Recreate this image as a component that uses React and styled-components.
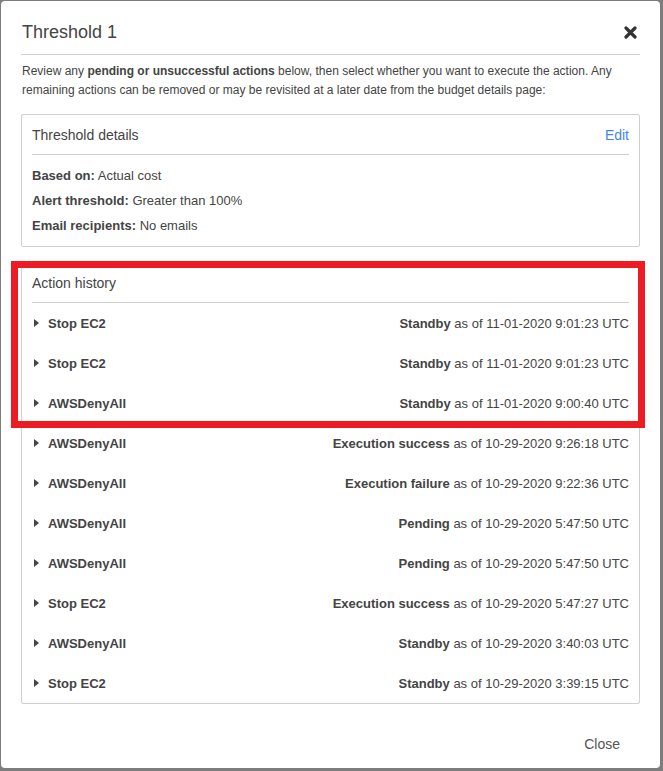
import React from 'react';
import styled, { createGlobalStyle } from 'styled-components';

const GlobalStyle = createGlobalStyle`
  html, body {
    margin: 0;
    padding: 0;
    background: #7d7d7d;
  }

  body {
    font-family: 'Liberation Sans', Arial, sans-serif;
    color: #444;
  }
`;

const Backdrop = styled.div`
  width: 663px;
  height: 771px;
  padding: 1px 0 0 1px;
  box-sizing: border-box;
`;

const Modal = styled.div`
  width: 659px;
  height: 767px;
  box-sizing: border-box;
  background: #fff;
  border-radius: 4px;
  padding: 0 20px;
  display: flex;
  flex-direction: column;
`;

const Header = styled.div`
  display: flex;
  align-items: center;
  justify-content: space-between;
  padding: 19px 0 10px;
  border-bottom: 1px solid #cfcfcf;
`;

const Title = styled.h2`
  margin: 0 0 0 1px;
  font-size: 18px;
  font-weight: 400;
  line-height: 24px;
  color: #444;
`;

const CloseIcon = styled.button`
  border: 0;
  background: none;
  padding: 0;
  margin-right: 3px;
  width: 13px;
  height: 13px;
  display: flex;
  cursor: pointer;
`;

const Intro = styled.p`
  margin: 7px 0 0 1px;
  font-size: 12px;
  line-height: 19px;
  color: #444;

  b {
    font-weight: 700;
  }
`;

const Card = styled.section`
  position: relative;
  border: 1px solid #d0d0d0;
  border-radius: 2px;
  margin-top: ${({ $gap }) => $gap}px;
`;

const CardHeader = styled.div`
  display: flex;
  align-items: center;
  justify-content: space-between;
  height: 39px;
  margin: 0 10px;
  border-bottom: 1px solid #cfcfcf;
  font-size: 14px;
  color: #444;
`;

const EditLink = styled.a`
  color: #3f87e5;
  font-size: 14px;
  text-decoration: none;
`;

const Details = styled.div`
  padding: 8px 10px 8px;
`;

const DetailLine = styled.div`
  font-size: 13px;
  line-height: 25px;
  color: #444;

  b {
    font-weight: 700;
  }
`;

const Row = styled.div`
  display: flex;
  align-items: center;
  justify-content: space-between;
  height: 40px;
  padding: 0 10px 0 12px;
  font-size: 13px;
  color: #444;
`;

const RowName = styled.div`
  display: flex;
  align-items: center;
  gap: 9px;
  font-weight: 700;
`;

const Status = styled.div`
  b {
    font-weight: 700;
  }
`;

const Highlight = styled.div`
  position: absolute;
  left: -11px;
  top: -2px;
  width: 634px;
  height: 167px;
  box-sizing: border-box;
  border: 7px solid #ed1c24;
  pointer-events: none;
`;

const Footer = styled.div`
  display: flex;
  justify-content: flex-end;
  padding-top: 29px;
`;

const CloseButton = styled.button`
  border: 0;
  background: none;
  font-family: 'Liberation Sans', Arial, sans-serif;
  font-size: 14px;
  color: #555;
  padding: 0;
  margin-right: 20px;
  line-height: 22px;
  cursor: pointer;
`;

const Caret = () => (
  <svg width="5" height="8" viewBox="0 0 5 8">
    <polygon points="0,0 5,4 0,8" fill="#444" />
  </svg>
);

const history = [
  ['Stop EC2', 'Standby', '11-01-2020 9:01:23 UTC'],
  ['Stop EC2', 'Standby', '11-01-2020 9:01:23 UTC'],
  ['AWSDenyAll', 'Standby', '11-01-2020 9:00:40 UTC'],
  ['AWSDenyAll', 'Execution success', '10-29-2020 9:26:18 UTC'],
  ['AWSDenyAll', 'Execution failure', '10-29-2020 9:22:36 UTC'],
  ['AWSDenyAll', 'Pending', '10-29-2020 5:47:50 UTC'],
  ['AWSDenyAll', 'Pending', '10-29-2020 5:47:50 UTC'],
  ['Stop EC2', 'Execution success', '10-29-2020 5:47:27 UTC'],
  ['AWSDenyAll', 'Standby', '10-29-2020 3:40:03 UTC'],
  ['Stop EC2', 'Standby', '10-29-2020 3:39:15 UTC'],
];

const App = () => (
  <Backdrop>
    <GlobalStyle />
    <Modal>
      <Header>
        <Title>Threshold 1</Title>
        <CloseIcon aria-label="Close">
          <svg width="13" height="13" viewBox="0 0 13 13">
            <path
              d="M2 2 L11 11 M11 2 L2 11"
              stroke="#333"
              strokeWidth="3.2"
              strokeLinecap="round"
            />
          </svg>
        </CloseIcon>
      </Header>

      <Intro>
        Review any <b>pending or unsuccessful actions</b> below, then select whether you want to
        execute the action. Any remaining actions can be removed or may be revisited at a later
        date from the budget details page:
      </Intro>

      <Card $gap={14}>
        <CardHeader>
          <span>Threshold details</span>
          <EditLink href="#">Edit</EditLink>
        </CardHeader>
        <Details>
          <DetailLine>
            <b>Based on:</b> Actual cost
          </DetailLine>
          <DetailLine>
            <b>Alert threshold:</b> Greater than 100%
          </DetailLine>
          <DetailLine>
            <b>Email recipients:</b> No emails
          </DetailLine>
        </Details>
      </Card>

      <Card $gap={15}>
        <CardHeader>
          <span>Action history</span>
        </CardHeader>
        {history.map(([name, state, time], i) => (
          <Row key={i}>
            <RowName>
              <Caret />
              {name}
            </RowName>
            <Status>
              <b>{state}</b> as of {time}
            </Status>
          </Row>
        ))}
        <Highlight />
      </Card>

      <Footer>
        <CloseButton>Close</CloseButton>
      </Footer>
    </Modal>
  </Backdrop>
);

export default App;
